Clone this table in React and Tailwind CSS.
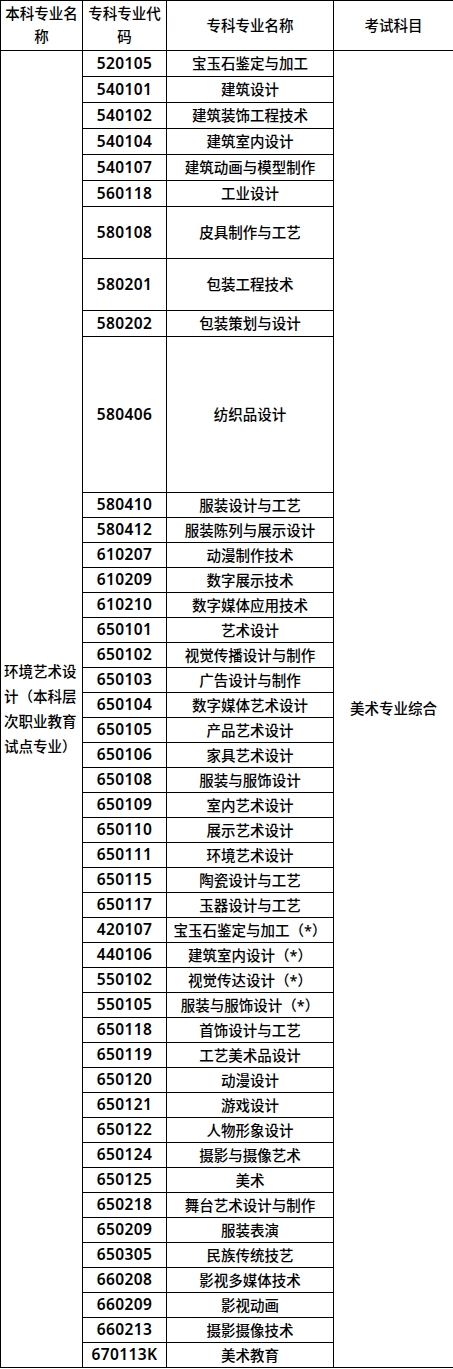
const rows = [
  ["520105", "宝玉石鉴定与加工", 1],
  ["540101", "建筑设计", 1],
  ["540102", "建筑装饰工程技术", 1],
  ["540104", "建筑室内设计", 1],
  ["540107", "建筑动画与模型制作", 1],
  ["560118", "工业设计", 1],
  ["580108", "皮具制作与工艺", 2],
  ["580201", "包装工程技术", 2],
  ["580202", "包装策划与设计", 1],
  ["580406", "纺织品设计", 6],
  ["580410", "服装设计与工艺", 1],
  ["580412", "服装陈列与展示设计", 1],
  ["610207", "动漫制作技术", 1],
  ["610209", "数字展示技术", 1],
  ["610210", "数字媒体应用技术", 1],
  ["650101", "艺术设计", 1],
  ["650102", "视觉传播设计与制作", 1],
  ["650103", "广告设计与制作", 1],
  ["650104", "数字媒体艺术设计", 1],
  ["650105", "产品艺术设计", 1],
  ["650106", "家具艺术设计", 1],
  ["650108", "服装与服饰设计", 1],
  ["650109", "室内艺术设计", 1],
  ["650110", "展示艺术设计", 1],
  ["650111", "环境艺术设计", 1],
  ["650115", "陶瓷设计与工艺", 1],
  ["650117", "玉器设计与工艺", 1],
  ["420107", "宝玉石鉴定与加工（*）", 1],
  ["440106", "建筑室内设计（*）", 1],
  ["550102", "视觉传达设计（*）", 1],
  ["550105", "服装与服饰设计（*）", 1],
  ["650118", "首饰设计与工艺", 1],
  ["650119", "工艺美术品设计", 1],
  ["650120", "动漫设计", 1],
  ["650121", "游戏设计", 1],
  ["650122", "人物形象设计", 1],
  ["650124", "摄影与摄像艺术", 1],
  ["650125", "美术", 1],
  ["650218", "舞台艺术设计与制作", 1],
  ["650209", "服装表演", 1],
  ["650305", "民族传统技艺", 1],
  ["660208", "影视多媒体技术", 1],
  ["660209", "影视动画", 1],
  ["660213", "摄影摄像技术", 1],
  ["670113K", "美术教育", 1],
];

const cell = "border border-black p-0 text-center align-middle";

export default function App() {
  return (
    <div className="w-[453px] bg-white text-black font-['Noto_Sans','Noto_Sans_CJK_SC',sans-serif] text-[14.5px] font-medium">
      <table className="w-[453px] table-fixed border-collapse">
        <colgroup>
          <col className="w-[82px]" />
          <col className="w-[84px]" />
          <col className="w-[167px]" />
          <col className="w-[120px]" />
        </colgroup>
        <thead>
          <tr className="h-[50px]">
            <th className={`${cell} font-medium leading-[23px] align-top pt-px`}>本科专业名称</th>
            <th className={`${cell} font-medium leading-[23px] align-top pt-px px-1`}>专科专业代码</th>
            <th className={`${cell} font-medium`}>专科专业名称</th>
            <th className={`${cell} font-medium`}>考试科目</th>
          </tr>
        </thead>
        <tbody>
          {rows.map(([code, name, units], i) => {
            const h = i < 10 ? 26 * units : 25 * units;
            return (
              <tr key={code} style={{ height: h }}>
                {i === 0 && (
                  <td rowSpan={rows.length} className="border border-black p-0 pl-[3px] text-left align-middle leading-[25px]">
                    环境艺术设计（本科层次职业教育试点专业）
                  </td>
                )}
                <td className={`${cell} font-semibold text-[15.5px] tracking-[0.4px] leading-none`}>{code}</td>
                <td className={`${cell} leading-none whitespace-nowrap`}>{name}</td>
                {i === 0 && (
                  <td rowSpan={rows.length} className={`${cell}`}>
                    美术专业综合
                  </td>
                )}
              </tr>
            );
          })}
        </tbody>
      </table>
    </div>
  );
}
